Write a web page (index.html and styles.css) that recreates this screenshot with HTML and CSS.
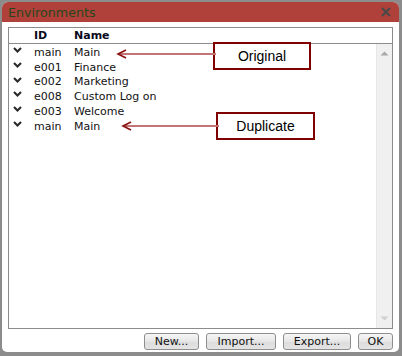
FILE: index.html
```html
<!DOCTYPE html>
<html>
<head>
<meta charset="utf-8">
<link rel="stylesheet" href="styles.css">
</head>
<body>
<div class="window">
  <div class="titlebar">
    <span class="title">Environments</span>
    <svg class="close" width="10" height="10" viewBox="0 0 10 10"><path d="M1 1L9 9M9 1L1 9" stroke="#4a4a4a" stroke-width="2.2" fill="none"/></svg>
  </div>
  <div class="content">
    <div class="grid">
      <div class="grid-header">
        <span class="c-chev"></span><span class="c-id">ID</span><span class="c-name">Name</span>
      </div>
      <div class="grid-body">
        <div class="rows">
          <div class="row"><span class="c-chev"><svg width="9" height="6" viewBox="0 0 9 6"><path d="M1 1L4.5 4.5L8 1" stroke="#2a2a2a" stroke-width="2.1" fill="none"/></svg></span><span class="c-id">main</span><span class="c-name">Main</span></div>
          <div class="row"><span class="c-chev"><svg width="9" height="6" viewBox="0 0 9 6"><path d="M1 1L4.5 4.5L8 1" stroke="#2a2a2a" stroke-width="2.1" fill="none"/></svg></span><span class="c-id">e001</span><span class="c-name">Finance</span></div>
          <div class="row"><span class="c-chev"><svg width="9" height="6" viewBox="0 0 9 6"><path d="M1 1L4.5 4.5L8 1" stroke="#2a2a2a" stroke-width="2.1" fill="none"/></svg></span><span class="c-id">e002</span><span class="c-name">Marketing</span></div>
          <div class="row"><span class="c-chev"><svg width="9" height="6" viewBox="0 0 9 6"><path d="M1 1L4.5 4.5L8 1" stroke="#2a2a2a" stroke-width="2.1" fill="none"/></svg></span><span class="c-id">e008</span><span class="c-name">Custom Log on</span></div>
          <div class="row"><span class="c-chev"><svg width="9" height="6" viewBox="0 0 9 6"><path d="M1 1L4.5 4.5L8 1" stroke="#2a2a2a" stroke-width="2.1" fill="none"/></svg></span><span class="c-id">e003</span><span class="c-name">Welcome</span></div>
          <div class="row"><span class="c-chev"><svg width="9" height="6" viewBox="0 0 9 6"><path d="M1 1L4.5 4.5L8 1" stroke="#2a2a2a" stroke-width="2.1" fill="none"/></svg></span><span class="c-id">main</span><span class="c-name">Main</span></div>
        </div>
        <div class="scrollbar">
          <svg width="9" height="5" viewBox="0 0 9 5"><path d="M0.5 4.5L4.5 0.5L8.5 4.5Z" fill="#a8a8a8"/></svg>
          <svg width="9" height="5" viewBox="0 0 9 5"><path d="M0.5 0.5L4.5 4.5L8.5 0.5Z" fill="#d0d0d0"/></svg>
        </div>
      </div>
    </div>
    <div class="buttons">
      <button class="btn btn-new">New...</button>
      <button class="btn btn-import">Import...</button>
      <button class="btn btn-export">Export...</button>
      <button class="btn btn-ok">OK</button>
    </div>
  </div>

  <div class="callout callout-original">Original</div>
  <div class="callout callout-duplicate">Duplicate</div>
  <svg class="arrow arrow-1" width="100" height="12" viewBox="0 0 100 12"><path d="M2 6H100" stroke="#c47474" stroke-width="2"/><path d="M10 2L2 6L10 10" stroke="#8a1010" stroke-width="1.6" fill="none"/></svg>
  <svg class="arrow arrow-2" width="98" height="12" viewBox="0 0 98 12"><path d="M2 6H98" stroke="#c47474" stroke-width="2"/><path d="M10 2L2 6L10 10" stroke="#8a1010" stroke-width="1.6" fill="none"/></svg>
</div>
</body>
</html>
```
FILE: styles.css
```css
html, body {
  margin: 0;
  padding: 0;
}
body {
  width: 402px;
  height: 356px;
  background: #8c8c8c;
  overflow: hidden;
  font-family: "DejaVu Sans", Verdana, sans-serif;
}
.window {
  position: relative;
  margin: 2px 3px 0 2px;
  height: 350px;
  background: #fff;
  border-radius: 6px 6px 5px 5px;
  display: flex;
  flex-direction: column;
}
.titlebar {
  height: 20px;
  background: #b0413a;
  border-radius: 6px 6px 0 0;
  display: flex;
  align-items: center;
  justify-content: space-between;
  padding: 0 6px 0 6px;
}
.title {
  color: #27461a;
  font-size: 12.7px;
}
.close {
  margin-right: 2px;
}
.content {
  flex: 1;
  padding: 5px 6px 0 6px;
  display: flex;
  flex-direction: column;
}
.grid {
  height: 300px;
  border: 1px solid #8c8c8c;
  display: flex;
  flex-direction: column;
}
.grid-header {
  height: 15px;
  border-bottom: 1px solid #8c8c8c;
  display: flex;
  align-items: center;
  font-weight: bold;
  font-size: 11px;
  color: #0a0a1e;
}
.grid-body {
  flex: 1;
  display: flex;
}
.rows {
  flex: 1;
  padding-top: 1px;
}
.row {
  height: 14.75px;
  display: flex;
  align-items: center;
  font-size: 11px;
  color: #111;
}
.c-chev {
  width: 25px;
  display: flex;
  padding-left: 4px;
  box-sizing: border-box;
  align-self: flex-start;
  padding-top: 2px;
}
.grid-header .c-chev {
  align-self: auto;
}
.c-id {
  width: 40px;
}
.c-name {
  flex: 1;
}
.scrollbar {
  width: 15px;
  background: #f0f0f0;
  border-left: 1px solid #e6e6e6;
  display: flex;
  flex-direction: column;
  justify-content: space-between;
  align-items: center;
  padding: 7px 0 7px 0;
}
.buttons {
  display: flex;
  justify-content: flex-end;
  gap: 7px;
  padding-top: 4px;
}
.btn {
  height: 17px;
  padding: 0;
  border: 1px solid #8e8e8e;
  border-radius: 3px;
  background: linear-gradient(#f6f6f6, #e6e6e6 50%, #dcdcdc 51%, #e4e4e4);
  font-family: "DejaVu Sans", Verdana, sans-serif;
  font-size: 11px;
  color: #111;
}
.btn-new { width: 55px; }
.btn-import { width: 70px; }
.btn-export { width: 68px; }
.btn-ok { width: 35px; }
.callout {
  position: absolute;
  box-sizing: border-box;
  border: 2px solid #800000;
  background: #fff;
  font-family: "Liberation Sans", Arial, sans-serif;
  font-size: 14px;
  color: #000;
  display: flex;
  align-items: center;
  justify-content: center;
}
.callout-original {
  left: 211px;
  top: 40px;
  width: 98px;
  height: 28px;
}
.callout-duplicate {
  left: 214px;
  top: 110px;
  width: 99px;
  height: 28px;
}
.arrow {
  position: absolute;
}
.arrow-1 {
  left: 114px;
  top: 46px;
}
.arrow-2 {
  left: 119px;
  top: 118px;
}
```
